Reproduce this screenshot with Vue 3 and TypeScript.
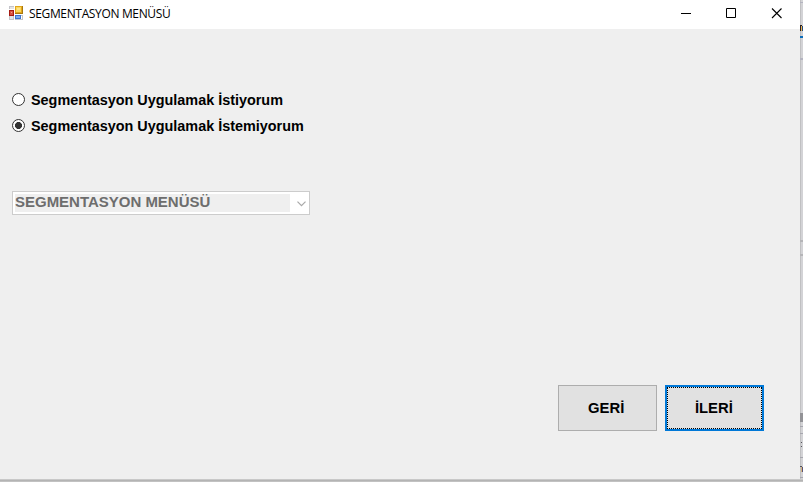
<script setup lang="ts">
import { ref } from 'vue'

const options: string[] = ['Segmentasyon Uygulamak İstiyorum', 'Segmentasyon Uygulamak İstemiyorum']
const selected = ref<number>(1)
</script>

<template>
  <div class="screen">
    <main class="window">
      <header class="titlebar">
        <svg class="app-icon" width="14" height="14" viewBox="0 0 14 14" shape-rendering="crispEdges">
          <path d="M0 0h5v3H0zM0 10h5v4H0z" fill="#e4e4e6" />
          <path d="M0 0h5v1H1v2H0zM0 10h1v3h4v1H0zM4 10h1v4H4z" fill="#c4c4c9" />
          <rect x="6" y="0" width="8" height="8" fill="#a9780d" />
          <rect x="6" y="0" width="7" height="7" fill="#e1a51b" />
          <rect x="7" y="1" width="5" height="5" fill="#fbd75c" />
          <rect x="8" y="2" width="3" height="2" fill="#ffe487" />
          <rect x="0" y="4" width="5" height="6" fill="#a51b13" />
          <rect x="1" y="5" width="3" height="4" fill="#d9513f" />
          <rect x="2" y="6" width="1" height="1" fill="#f4a08f" />
          <rect x="6" y="9" width="6" height="4" fill="#3d75cf" />
          <rect x="7" y="10" width="4" height="2" fill="#7eabee" />
          <path d="M12 9h2v5H6v-1h7v-3h-1z" fill="#c4c4c9" />
        </svg>
        <h1 class="title">SEGMENTASYON MENÜSÜ</h1>
        <svg class="controls" width="137" height="28" viewBox="0 0 137 28">
          <path d="M18 13.5h10M63.500 8.500h9v9h-9z" fill="none" stroke="#000" />
          <path d="M109 8.500l9.500 9.500M118.500 8.500l-9.500 9.500" fill="none" stroke="#000" stroke-width="1.100" />
        </svg>
      </header>

      <section class="body">
        <div class="options">
          <label v-for="(text, i) in options" :key="text" class="option" @click="selected = i">
            <span class="radio" :class="{ checked: selected === i }"></span>
            <span class="option-text">{{ text }}</span>
          </label>
        </div>

        <div class="combo">
          <div class="combo-value"><span class="combo-text">SEGMENTASYON MENÜSÜ</span></div>
          <svg class="chevron" width="9" height="6" viewBox="0 0 9 6">
            <path d="M.5 .7l4 4 4-4" fill="none" stroke="#a8a8a8" stroke-width="1.200" />
          </svg>
        </div>

        <div class="actions">
          <button class="btn"><span class="btn-text">GERİ</span></button>
          <button class="btn primary"><span class="btn-text">İLERİ</span></button>
        </div>
      </section>
    </main>

    <svg class="edge" width="3" height="479" viewBox="0 0 3 479" shape-rendering="crispEdges">
      <rect width="3" height="479" fill="#d3d3d6" />
      <rect width="1" height="479" fill="#c0c0c2" />
      <path d="M0 2h3v1H0zM0 58h3v2H0z" fill="#b4b4c0" />
      <path d="M0 25h1v6H0zM1 25h1v1H1z" fill="#2b2020" />
      <path d="M1 26h1v5H1z" fill="#e8b050" />
      <path d="M2 26h1v5H2z" fill="#1f4c80" />
      <path d="M0 36h3v2H0z" fill="#0a6cba" />
      <path d="M0 240h3v2H0zM0 254h3v2H0z" fill="#b5b5b8" />
      <path d="M0 413h3v9H0z" fill="#929296" />
      <path d="M0 426h3v1H0zM0 433h3v1H0zM0 457h3v1H0zM0 477h3v1H0z" fill="#a6a6ae" />
      <path d="M1 442h1v1H1zM1 446h1v1H1zM0 466h2v1H0z" fill="#56565c" />
      <path d="M2 467h1v5H2z" fill="#59547a" />
      <path d="M1 467h1v5H1z" fill="#d7b47c" />
    </svg>
    <div class="shadow"></div>
  </div>
</template>

<style>
body {
  margin: 0;
  overflow: hidden;
}
</style>

<style scoped>
.screen {
  display: grid;
  grid-template-columns: 800px 3px;
  grid-template-rows: 479px 3px;
  width: 803px;
  height: 482px;
  overflow: hidden;
  font-family: "Liberation Sans", Arial, sans-serif;
}

.window {
  display: flex;
  flex-direction: column;
  background: #efefef;
}

.titlebar {
  display: flex;
  height: 29px;
  flex: none;
  box-sizing: border-box;
  padding-left: 9px;
  background: #fff;
}

.app-icon {
  margin-top: 6px;
}

.title {
  margin: 0 0 0 6px;
  font: 400 12px/27px "Open Sans", "Noto Sans", sans-serif;
  letter-spacing: -0.35px;
  white-space: nowrap;
  color: #000;
}

.controls {
  margin-left: auto;
}

.body {
  display: flex;
  flex: 1;
  flex-direction: column;
  align-items: flex-start;
  padding: 58px 36px 48px 12px;
}

.options {
  display: flex;
  flex-direction: column;
}

.option {
  display: flex;
  align-items: flex-start;
  height: 26px;
}

.radio {
  box-sizing: border-box;
  width: 13px;
  height: 13px;
  margin: 6px 6px 0 0;
  border: 1px solid #333;
  border-radius: 50%;
  background: #fff;
}

.radio.checked {
  background: radial-gradient(circle, #333 3.2px, #fff 3.8px);
}

.option-text {
  font-size: 14px;
  font-weight: 700;
  line-height: 26px;
  white-space: nowrap;
  color: #000;
  transform: scaleX(1.028);
  transform-origin: left;
}

.combo {
  display: flex;
  box-sizing: border-box;
  width: 298px;
  height: 24px;
  margin-top: 52px;
  padding: 2px;
  border: 1px solid #ccc;
  background: #fff;
}

.combo-value {
  width: 275px;
  height: 18px;
  background: #efefef;
  color: #6d6d6d;
  font-size: 14px;
  font-weight: 700;
  line-height: 17px;
  white-space: nowrap;
}

.combo-text {
  display: inline-block;
  transform: scaleX(1.07);
  transform-origin: left;
}

.chevron {
  margin: 7px 0 0 7px;
}

.actions {
  display: flex;
  gap: 8px;
  margin-top: auto;
  margin-left: auto;
}

.btn {
  box-sizing: border-box;
  width: 99px;
  height: 46px;
  padding: 0;
  border: 1px solid #adadad;
  border-radius: 0;
  background: #e1e1e1;
  color: #000;
  font: 700 14px/16px "Liberation Sans", Arial, sans-serif;
}

.btn.primary {
  border: 2px solid #0078d7;
  outline: 1px dotted #000;
  outline-offset: -3px;
}

.btn-text {
  display: inline-block;
  position: relative;
  left: -1px;
  transform: scaleX(1.06);
}

.edge {
  display: block;
}

.shadow {
  grid-column: 1 / 3;
  background: linear-gradient(#c8c8c8 0 1px, #b4b4b4 1px 2px, #c2c2c2 2px);
}
</style>
